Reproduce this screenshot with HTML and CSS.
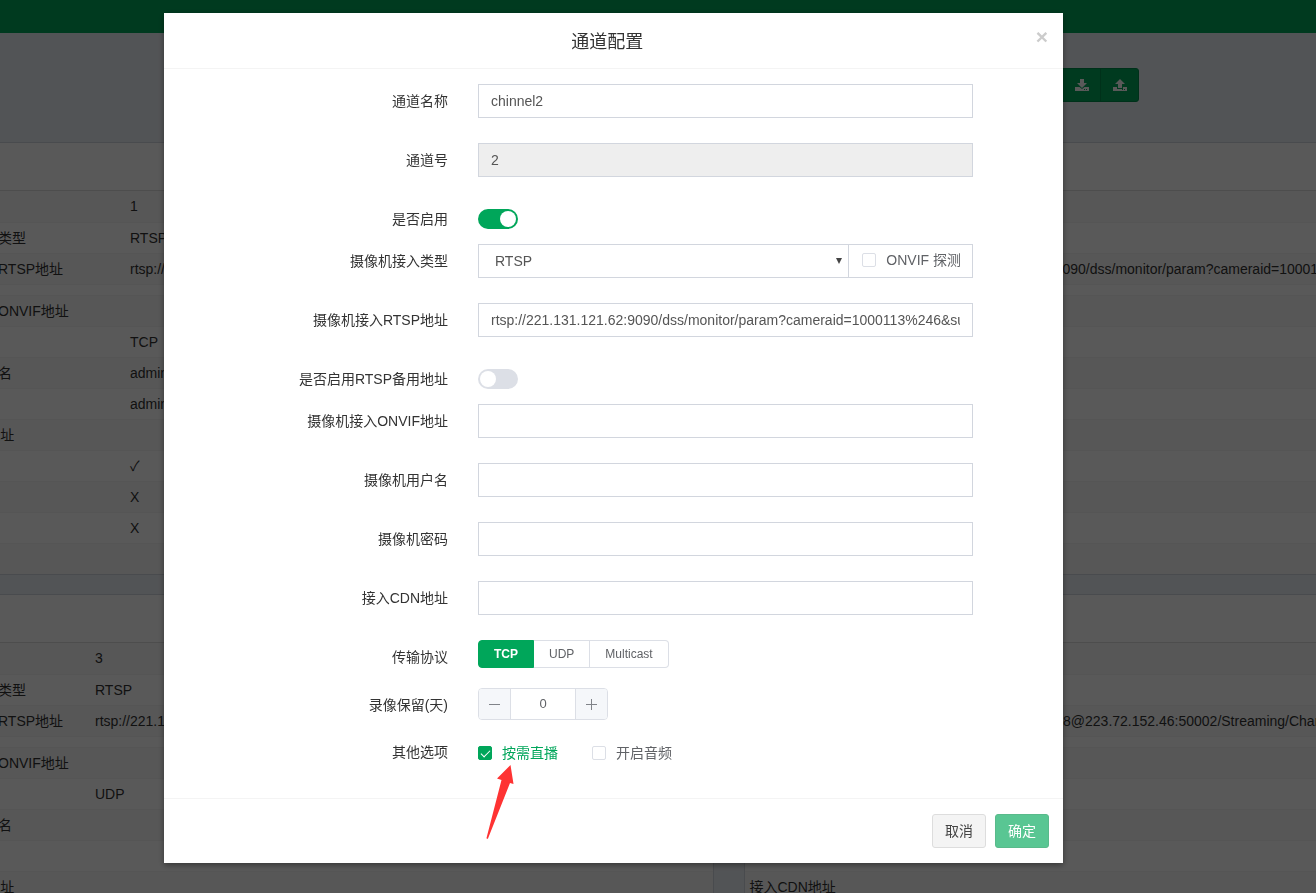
FILE: index.html
```html
<!DOCTYPE html>
<html lang="zh-CN">
<head>
<meta charset="utf-8">
<title>通道配置</title>
<link rel="stylesheet" href="styles.css">
</head>
<body>
<div class="page">
  <header class="topbar"></header>
  <div class="toolbar">
    <div class="btn-group">
      <button type="button" class="tool-btn" aria-label="导入"><svg viewBox="0 0 14 12" width="14" height="12"><path fill="currentColor" d="M5 0h4v4h3L7 9 2 4h3zM0 8h4.500L7 10 9.500 8H14v4H0z"/><path fill="#00a65a" d="M9 10h1v1H9zM11 10h1v1h-1z"/></svg></button>
      <button type="button" class="tool-btn" aria-label="导出"><svg viewBox="0 0 14 12" width="14" height="12"><path fill="currentColor" d="M5 9V5H2l5-5 5 5H9v4zM0 8h4v2h6V8h4v4H0z"/><path fill="#00a65a" d="M9 10h1v1H9zM11 10h1v1h-1z"/></svg></button>
    </div>
  </div>
  <main class="cards">
    <section class="card">
      <div class="card-head"></div>
      <table class="info col-wide">
        <tr><th>通道号</th><td>1</td></tr>
        <tr><th>摄像机接入类型</th><td>RTSP</td></tr>
        <tr><th>摄像机接入RTSP地址</th><td>rtsp://</td></tr>
        <tr class="scroll-row"><th></th><td></td></tr>
        <tr><th>摄像机接入ONVIF地址</th><td></td></tr>
        <tr><th>传输协议</th><td>TCP</td></tr>
        <tr><th>摄像机用户名</th><td>admin</td></tr>
        <tr><th>摄像机密码</th><td>admin</td></tr>
        <tr><th>接入CDN地址</th><td></td></tr>
        <tr><th>是否启用</th><td>✓</td></tr>
        <tr><th>按需直播</th><td>X</td></tr>
        <tr><th>开启音频</th><td>X</td></tr>
        <tr><th></th><td></td></tr>
      </table>
    </section>
    <section class="card">
      <div class="card-head"></div>
      <table class="info col-mid">
        <tr><th></th><td></td></tr>
        <tr><th></th><td></td></tr>
        <tr><th></th><td>rtsp://221.131.121.62:9090/dss/monitor/param?cameraid=1000113%246</td></tr>
        <tr class="scroll-row"><th></th><td></td></tr>
        <tr><th></th><td></td></tr>
        <tr><th></th><td></td></tr>
        <tr><th></th><td></td></tr>
        <tr><th></th><td></td></tr>
        <tr><th></th><td></td></tr>
        <tr><th></th><td></td></tr>
        <tr><th></th><td></td></tr>
        <tr><th></th><td></td></tr>
        <tr><th></th><td></td></tr>
      </table>
    </section>
    <section class="card">
      <div class="card-head"></div>
      <table class="info col-narrow">
        <tr><th>通道号</th><td>3</td></tr>
        <tr><th>摄像机接入类型</th><td>RTSP</td></tr>
        <tr><th>摄像机接入RTSP地址</th><td>rtsp://221.131.121.62</td></tr>
        <tr class="scroll-row"><th></th><td></td></tr>
        <tr><th>摄像机接入ONVIF地址</th><td></td></tr>
        <tr><th>传输协议</th><td>UDP</td></tr>
        <tr><th>摄像机用户名</th><td></td></tr>
        <tr><th>摄像机密码</th><td></td></tr>
        <tr><th>接入CDN地址</th><td></td></tr>
      </table>
    </section>
    <section class="card">
      <div class="card-head"></div>
      <table class="info col-large">
        <tr><th></th><td></td></tr>
        <tr><th></th><td></td></tr>
        <tr><th></th><td>rtsp://admin:12345678@223.72.152.46:50002/Streaming/Channels</td></tr>
        <tr class="scroll-row"><th></th><td></td></tr>
        <tr><th></th><td></td></tr>
        <tr><th></th><td></td></tr>
        <tr><th></th><td></td></tr>
        <tr><th></th><td></td></tr>
        <tr><th>接入CDN地址</th><td></td></tr>
      </table>
    </section>
  </main>
</div>

<div class="backdrop">
  <form class="modal" role="dialog" aria-labelledby="dlg-title">
    <div class="modal-head">
      <h4 class="modal-title" id="dlg-title">通道配置</h4>
      <button type="button" class="close" aria-label="关闭">×</button>
    </div>
    <div class="modal-body">
      <div class="row"><label class="name" for="f-name">通道名称</label><div class="field tall"><input class="text" id="f-name" type="text" value="chinnel2"></div></div>
      <div class="row"><label class="name" for="f-no">通道号</label><div class="field tall"><input class="text" id="f-no" type="text" value="2" disabled></div></div>
      <div class="row"><label class="name" for="f-on">是否启用</label><div class="field"><input class="switch" id="f-on" type="checkbox" checked></div></div>
      <div class="row"><label class="name" for="f-type">摄像机接入类型</label>
        <div class="field tall">
          <div class="input-group">
            <div class="select-wrap">
              <select class="text select" id="f-type"><option>RTSP</option><option>ONVIF</option></select>
              <svg class="caret" viewBox="0 0 6 6" width="6" height="6"><path fill="#444" d="M0 0h6L3 6z"/></svg>
            </div>
            <label class="check addon"><input type="checkbox">ONVIF 探测</label>
          </div>
        </div>
      </div>
      <div class="row"><label class="name" for="f-rtsp">摄像机接入RTSP地址</label><div class="field tall"><input class="text" id="f-rtsp" type="text" value="rtsp://221.131.121.62:9090/dss/monitor/param?cameraid=1000113%246&amp;substream=1"></div></div>
      <div class="row"><label class="name" for="f-bak">是否启用RTSP备用地址</label><div class="field"><input class="switch" id="f-bak" type="checkbox"></div></div>
      <div class="row"><label class="name" for="f-onvif">摄像机接入ONVIF地址</label><div class="field tall"><input class="text" id="f-onvif" type="text"></div></div>
      <div class="row"><label class="name" for="f-user">摄像机用户名</label><div class="field tall"><input class="text" id="f-user" type="text"></div></div>
      <div class="row"><label class="name" for="f-pwd">摄像机密码</label><div class="field tall"><input class="text" id="f-pwd" type="password"></div></div>
      <div class="row"><label class="name" for="f-cdn">接入CDN地址</label><div class="field tall"><input class="text" id="f-cdn" type="text"></div></div>
      <div class="row"><span class="name" id="l-proto">传输协议</span>
        <div class="field">
          <div class="radios" role="radiogroup" aria-labelledby="l-proto">
            <label><input type="radio" name="proto" checked><span>TCP</span></label>
            <label><input type="radio" name="proto"><span>UDP</span></label>
            <label><input type="radio" name="proto"><span>Multicast</span></label>
          </div>
        </div>
      </div>
      <div class="row"><label class="name" for="f-days">录像保留(天)</label>
        <div class="field">
          <div class="stepper">
            <button type="button" aria-label="减少"><svg viewBox="0 0 11 11" width="11" height="11"><path stroke="#808389" d="M0 5.500h11"/></svg></button>
            <input id="f-days" type="text" value="0">
            <button type="button" aria-label="增加"><svg viewBox="0 0 11 11" width="11" height="11"><path stroke="#808389" d="M0 5.500h11M5.500 0v11"/></svg></button>
          </div>
        </div>
      </div>
      <div class="row"><span class="name">其他选项</span>
        <div class="field options">
          <label class="check"><input type="checkbox" checked>按需直播</label>
          <label class="check"><input type="checkbox">开启音频</label>
          <svg class="arrow" viewBox="0 0 28 75" width="28" height="75"><path fill="#fe3333" d="M24.500 0 27.500 19 24 18 2 73.500 1 74 0.500 73 15.500 15 11 13.500z"/></svg>
        </div>
      </div>
    </div>
    <div class="modal-foot">
      <button type="button" class="btn">取消</button>
      <button type="submit" class="btn primary">确定</button>
    </div>
  </form>
</div>
</body>
</html>
```
FILE: styles.css
```css
* { box-sizing: border-box; }

body {
  margin: 0;
  height: 100vh;
  overflow: hidden;
  background: #ecf0f5;
  color: #333;
  font: 14px/20px "Liberation Sans", "Noto Sans CJK SC", sans-serif;
}

button, input, select { font: inherit; color: inherit; margin: 0; }

/* Page behind the dialog */
.page { margin: 0 -219px 0 -78px; }
.topbar { height: 33px; background: #00a65a; }
.toolbar { height: 109px; padding: 35px 0 0 1140px; }
.btn-group { display: flex; }
.tool-btn {
  display: flex;
  align-items: center;
  justify-content: center;
  width: 39px;
  height: 34px;
  padding: 0;
  border: 1px solid #008d4c;
  background: #00a65a;
  color: #fff;
}
.tool-btn + .tool-btn { margin-left: -1px; border-radius: 0 3px 3px 0; }

.cards {
  display: grid;
  grid-template-columns: 1fr 1fr;
  gap: 19px 30px;
}
.card {
  border: 1px solid #d2d6de;
  background: #fff;
  overflow: hidden;
}
.card-head { height: 48px; border-bottom: 1px solid #ddd; }
.info {
  width: 100%;
  table-layout: fixed;
  border-collapse: collapse;
}
.info tr { height: 31px; }
.info tr:nth-child(odd) { background: #f9f9f9; }
.info tr + tr { border-top: 1px solid #f4f4f4; }
.info .scroll-row { height: 11px; }
.info th, .info td {
  padding: 0 5px;
  font-weight: 400;
  text-align: left;
  white-space: nowrap;
}
.col-wide th { width: 202px; }
.col-narrow th { width: 167px; }
.col-mid th { width: 169px; }
.col-large th { width: 182px; }

/* Dialog */
.backdrop {
  position: fixed;
  inset: 0;
  padding: 13px 253px 0 164px;
  background: rgba(0, 0, 0, 0.65);
}
.modal { background: #fff; box-shadow: 0 2px 6px rgba(0, 0, 0, 0.4); }
.modal-head {
  display: flex;
  align-items: flex-start;
  padding: 15px;
  border-bottom: 1px solid #f4f4f4;
}
.modal-title {
  flex: 1;
  margin: 0;
  padding-top: 3px;
  font-size: 18px;
  line-height: 22px;
  font-weight: 400;
  text-align: center;
}
.close {
  padding: 0;
  border: 0;
  background: none;
  color: #ccc;
  font-size: 21px;
  line-height: 18px;
  font-weight: 700;
}
.modal-body { padding: 15px 90px 20px 15px; }
.row {
  display: flex;
  align-items: flex-start;
  gap: 30px;
  margin-bottom: 15px;
}
.name { width: 269px; padding-top: 7px; text-align: right; }
.field { flex: 1; min-width: 0; display: flex; }
.tall { padding-bottom: 10px; }
.text {
  width: 100%;
  height: 34px;
  padding: 6px 12px;
  border: 1px solid #d2d6de;
  border-radius: 0;
  background: #fff;
  color: #555;
}
.text:disabled { background: #eee; }
.input-group { display: flex; width: 100%; }
.select-wrap { position: relative; flex: 1; }
.select { appearance: none; padding-left: 16px; }
.caret { position: absolute; right: 7px; top: 14px; }
.addon {
  height: 34px;
  padding: 0 11px 2px 13px;
  border: 1px solid #d2d6de;
  border-left: 0;
}

.switch {
  appearance: none;
  width: 40px;
  height: 20px;
  margin-top: 7px;
  padding: 2px;
  border-radius: 10px;
  background: #dcdfe6;
}
.switch::before {
  content: "";
  display: block;
  width: 16px;
  height: 16px;
  border-radius: 50%;
  background: #fff;
}
.switch:checked { background: #00a65a; }
.switch:checked::before { margin-left: auto; }

.check { display: flex; align-items: center; gap: 10px; color: #606266; }
.check input {
  appearance: none;
  width: 14px;
  height: 14px;
  border: 1px solid #dcdfe6;
  border-radius: 2px;
  background: #fff;
}
.check input:checked {
  display: flex;
  justify-content: center;
  border-color: #00a65a;
  background: #00a65a;
}
.check input:checked::before {
  content: "";
  width: 4px;
  height: 8px;
  margin-top: 1px;
  border: solid #fff;
  border-width: 0 1px 1px 0;
  transform: rotate(45deg);
}
.check:has(:checked) { color: #00a65a; }
.options { position: relative; gap: 34px; padding-top: 8px; }
.arrow { position: absolute; left: 8px; top: 30px; }

.radios {
  display: flex;
  margin-bottom: 5px;
  font-size: 12px;
  line-height: 26px;
  color: #606266;
}
.radios input { position: absolute; opacity: 0; }
.radios span {
  display: block;
  padding: 0 15px;
  border: 1px solid #dcdfe6;
  border-left: 0;
}
.radios label:first-child span { border-radius: 4px 0 0 4px; border-left: 1px solid #dcdfe6; }
.radios label:last-child span { border-radius: 0 4px 4px 0; }
.radios input:checked + span { background: #00a65a; border-color: #00a65a; color: #fff; font-weight: 700; }

.stepper {
  display: flex;
  width: 130px;
  height: 32px;
  border: 1px solid #dcdfe6;
  border-radius: 4px;
  overflow: hidden;
}
.stepper button {
  display: flex;
  align-items: center;
  justify-content: center;
  width: 31px;
  padding: 0;
  border: 0;
  background: #f5f7fa;
}
.stepper input {
  flex: 1;
  min-width: 0;
  border: solid #dcdfe6;
  border-width: 0 1px;
  color: #606266;
  font-size: 13px;
  text-align: center;
}

.modal-foot {
  display: flex;
  justify-content: flex-end;
  gap: 9px;
  padding: 15px 14px;
  border-top: 1px solid #f4f4f4;
}
.btn {
  height: 34px;
  padding: 0 12px;
  border: 1px solid #ddd;
  border-radius: 3px;
  background: #f4f4f4;
  color: #444;
}
.primary { border-color: #59ba8b; background: #59c693; color: #fff; }
```
